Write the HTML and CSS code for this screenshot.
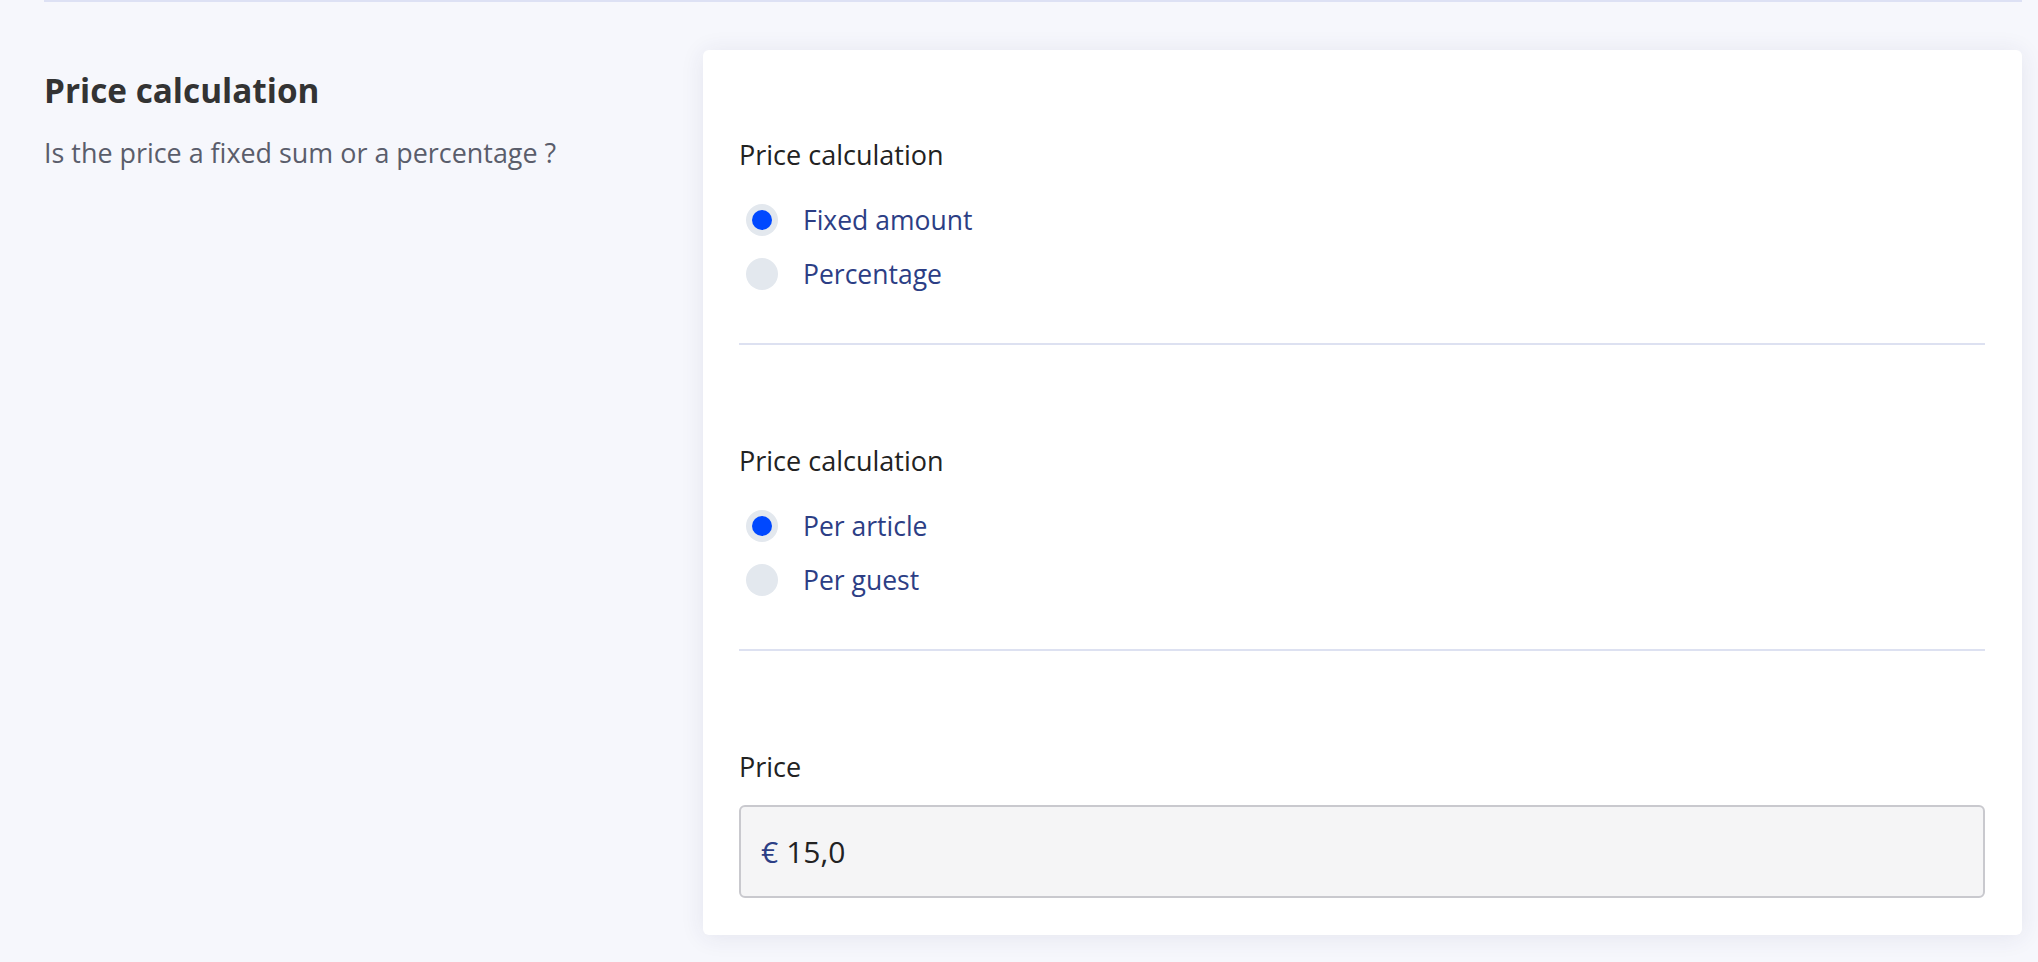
FILE: index.html
```html
<!DOCTYPE html>
<html lang="en">
<head>
<meta charset="utf-8">
<title>Price calculation</title>
<link rel="stylesheet" href="styles.css">
</head>
<body>
<div class="page">
  <div class="settings-row">
    <div class="intro">
      <h2 class="intro-title">Price calculation</h2>
      <p class="intro-text">Is the price a fixed sum or a percentage ?</p>
    </div>
    <div class="card">
      <div class="section">
        <div class="field-label">Price calculation</div>
        <div class="radio-group">
          <label class="radio-row"><span class="radio checked"></span><span class="radio-text">Fixed amount</span></label>
          <label class="radio-row"><span class="radio"></span><span class="radio-text">Percentage</span></label>
        </div>
      </div>
      <div class="section">
        <div class="field-label">Price calculation</div>
        <div class="radio-group">
          <label class="radio-row"><span class="radio checked"></span><span class="radio-text">Per article</span></label>
          <label class="radio-row"><span class="radio"></span><span class="radio-text">Per guest</span></label>
        </div>
      </div>
      <div class="section last">
        <div class="field-label">Price</div>
        <div class="input">
          <span class="currency">€</span><span class="value">15,0</span>
        </div>
      </div>
    </div>
  </div>
</div>
</body>
</html>
```
FILE: styles.css
```css
html, body {
  margin: 0;
  padding: 0;
}
body {
  background: #f6f7fc;
  font-family: "Open Sans", Lato, sans-serif;
  color: #222;
}
.page {
  padding: 0 16px 0 44px;
}
.settings-row {
  display: flex;
  border-top: 2px solid #dde1f4;
  padding-bottom: 30px;
}
.intro {
  flex: 0 0 659px;
}
.intro-title {
  margin: 68px 0 0;
  font-size: 33.3px;
  line-height: 40px;
  font-weight: 700;
  color: #333;
}
.intro-text {
  margin: 25px 0 0;
  font-size: 26.9px;
  line-height: 36px;
  color: #5a5d6b;
}
.card {
  flex: 1;
  margin-top: 48px;
  background: #fff;
  border-radius: 6px;
  box-shadow: 0 2px 24px rgba(40, 44, 100, 0.09);
  padding: 0 37px 0 36px;
}
.section {
  padding: 98px 0 42px;
  border-bottom: 2px solid #dde1f1;
}
.section:first-child {
  padding-top: 87px;
}
.section.last {
  border-bottom: none;
  padding-bottom: 37px;
}
.field-label {
  font-size: 27px;
  line-height: 36px;
  color: #222;
}
.radio-group {
  margin-top: 20px;
}
.radio-row {
  display: flex;
  align-items: center;
  height: 54px;
}
.radio {
  box-sizing: border-box;
  flex: 0 0 32px;
  width: 32px;
  height: 32px;
  margin-left: 7px;
  border-radius: 50%;
  background: #e3e8ee;
  display: flex;
  align-items: center;
  justify-content: center;
}
.radio.checked::after {
  content: "";
  width: 20px;
  height: 20px;
  border-radius: 50%;
  background: #0048ff;
}
.radio-text {
  margin-left: 25px;
  font-size: 26.5px;
  color: #2c3e85;
}
.input {
  margin-top: 20px;
  box-sizing: border-box;
  height: 93px;
  border: 2px solid #c9c9ce;
  border-radius: 6px;
  background: #f5f5f6;
  display: flex;
  align-items: center;
  padding-left: 20px;
  font-size: 30px;
}
.currency {
  color: #2c3e85;
  margin-right: 8px;
}
.value {
  color: #222;
}
```
